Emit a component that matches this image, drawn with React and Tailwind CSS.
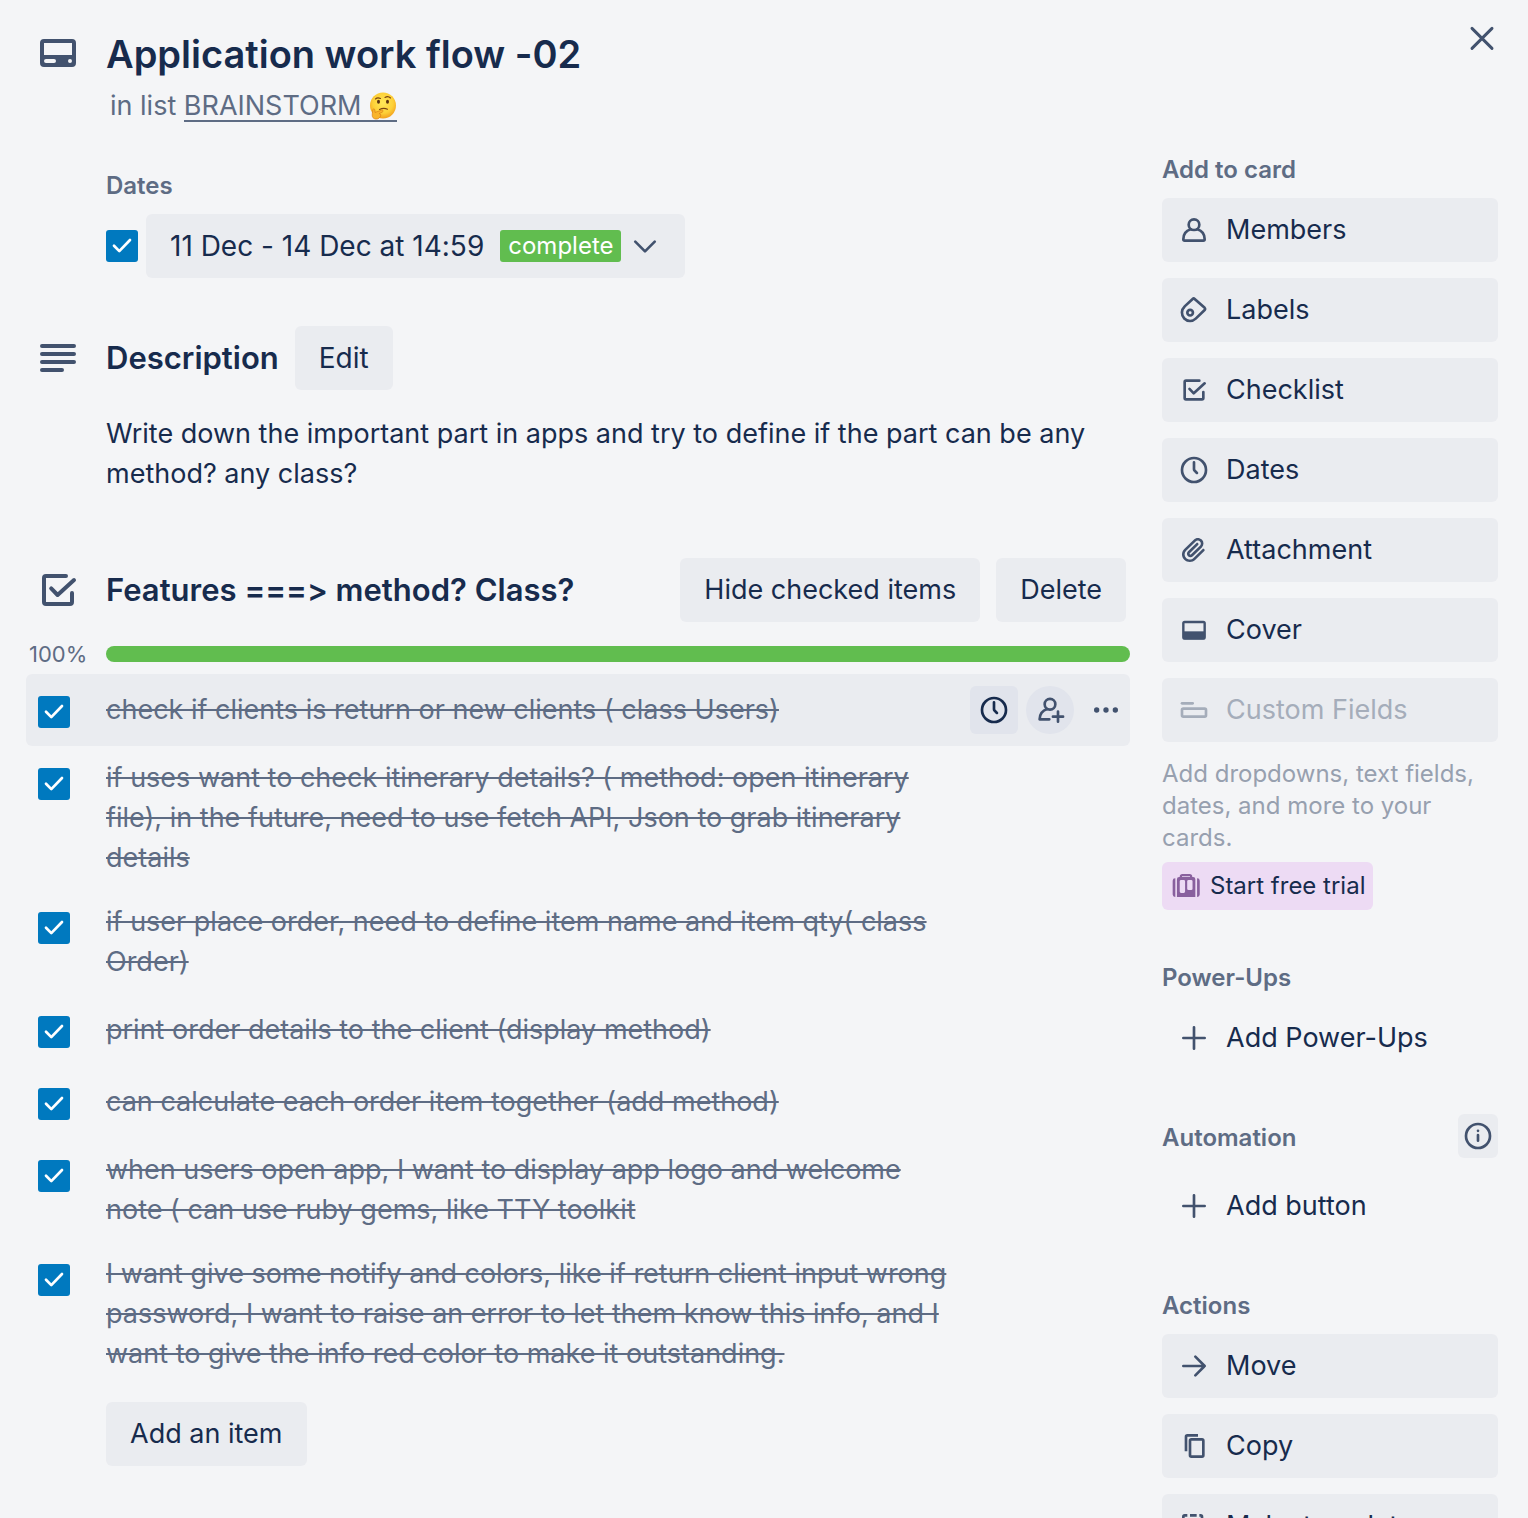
import React, { useState } from 'react';

function Svg({ className = 'size-8', children }) {
  return (
    <svg viewBox="0 0 24 24" className={`shrink-0 ${className}`} fill="none" stroke="currentColor" strokeWidth="2" strokeLinecap="round" strokeLinejoin="round" aria-hidden="true">
      {children}
    </svg>
  );
}

const CardIcon = (p) => (
  <Svg {...p}>
    <rect x="4" y="6" width="16" height="12" rx="1" />
    <path stroke="none" fill="currentColor" fillRule="evenodd" d="M4 13h16v5H4zM6 15a1 1 0 0 0 0 2h4a1 1 0 0 0 0-2zM18 15a1 1 0 1 0 0 2a1 1 0 0 0 0-2z" />
  </Svg>
);
const LinesIcon = (p) => <Svg {...p}><path d="M4 6h16M4 10h16M4 14h16M4 18h10" /></Svg>;
const ChecklistIcon = (p) => (
  <Svg {...p}><path d="M16 5H6a1 1 0 0 0-1 1v12a1 1 0 0 0 1 1h12a1 1 0 0 0 1-1v-4.5M8.6 11.2l3.2 3.3L20 7" /></Svg>
);
const MemberIcon = (p) => (
  <Svg {...p}>
    <circle cx="12" cy="8" r="4" />
    <path d="M9.5 11.5C6.2 12.5 4 15.300 4 19a1 1 0 0 0 1 1h14a1 1 0 0 0 1-1c0-3.700-2.200-6.500-5.500-7.500" />
  </Svg>
);
const LabelIcon = (p) => (
  <Svg {...p}>
    <path d="M5 9.300L11 3.700a1.100 1.100 0 0 1 1.500 0L20 10.400a1.100 1.100 0 0 1 0 1.600L13.300 18.500a6.100 6.100 0 0 1-8.600-.1a6.400 6.400 0 0 1 .3-9.100z" />
    <circle cx="9.100" cy="14" r="2.100" />
  </Svg>
);
const ClockIcon = (p) => <Svg {...p}><circle cx="12" cy="12" r="9" /><path d="M12 6.200v5.200q0 .6.400 1l1.800 1.800" /></Svg>;
const ClipIcon = (p) => (
  <Svg {...p}>
    <path stroke="none" fill="currentColor" d="M11.6426 17.9647C10.1123 19.46 7.62736 19.4606 6.10092 17.9691C4.57505 16.478 4.57769 14.0467 6.10253 12.5566L13.2505 5.57184C14.1476 4.6952 15.5861 4.69251 16.4832 5.56921C17.3763 6.44184 17.3778 7.85135 16.4869 8.72199L9.78361 15.2722C9.53288 15.5172 9.12807 15.5163 8.86954 15.2636C8.61073 15.0107 8.60963 14.6158 8.86954 14.3618L15.0989 8.27463C15.4812 7.90109 15.4812 7.29546 15.0989 6.92192C14.7167 6.54838 14.0969 6.54838 13.7146 6.92192L7.48523 13.0091C6.45911 14.0118 6.46356 15.618 7.48523 16.6163C8.50674 17.6145 10.1511 17.6186 11.1679 16.6249L17.8712 10.0747C19.5274 8.45632 19.5244 5.83555 17.8676 4.2165C16.2047 2.59156 13.5266 2.59657 11.8662 4.21913L4.71822 11.2039C2.42951 13.4404 2.42555 17.083 4.71661 19.3218C7.00774 21.5606 10.7323 21.5597 13.0269 19.3174L19.7133 12.7837C20.0956 12.4101 20.0956 11.8045 19.7133 11.431C19.331 11.0574 18.7113 11.0574 18.329 11.431L11.6426 17.9647Z" />
  </Svg>
);
const CoverIcon = (p) => (
  <Svg {...p}>
    <rect x="4" y="6" width="16" height="12.500" rx="1" strokeWidth="1.800" />
    <path stroke="none" fill="currentColor" d="M4 13h16v6H4z" />
  </Svg>
);
const FieldsIcon = (p) => <Svg {...p}><path d="M3 7h8" /><rect x="3" y="11" width="18" height="6" rx="1" strokeWidth="2" /></Svg>;
const SuitcaseIcon = (p) => (
  <Svg {...p}>
    <path stroke="none" fill="currentColor" fillRule="evenodd" d="M4 6.200v14A1.900 1.900 0 0 1 2 18.400V8A1.900 1.900 0 0 1 4 6.200zM20.300 6.200v14a1.900 1.900 0 0 0 2-1.800V8a1.900 1.900 0 0 0-2-1.800zM7.300 5a2 2 0 0 1 2-2h5.400a2 2 0 0 1 2 2v.3h.6A1.700 1.700 0 0 1 19 7v13.200H5.200V7A1.700 1.700 0 0 1 6.900 5.300h.4zM9 5.300h6V4.700H9zM8.300 7.500a1 1 0 0 0-1 1v7.700a1 1 0 0 0 1 1h2a1 1 0 0 0 1-1V8.500a1 1 0 0 0-1-1zM13.900 7.500a1 1 0 0 0-1 1v5.500a1 1 0 0 0 1 1h2a1 1 0 0 0 1-1V8.500a1 1 0 0 0-1-1z" />
  </Svg>
);
const PlusIcon = (p) => <Svg {...p}><path d="M12 4v16M4 12h16" /></Svg>;
const InfoIcon = (p) => <Svg {...p}><circle cx="12" cy="12" r="9" /><path d="M12 11.300v4.200M12 8.100v.01" /></Svg>;
const ArrowIcon = (p) => <Svg {...p}><path d="M4 12h16M13 5l7 7l-7 7" /></Svg>;
const CopyIcon = (p) => (
  <Svg {...p}>
    <rect x="9" y="7" width="10" height="13" rx="1" />
    <path strokeLinecap="butt" d="M15 4H7a1 1 0 0 0-1 1v11" />
  </Svg>
);
const TemplateIcon = (p) => (
  <Svg {...p}><path strokeLinecap="butt" d="M4 8V5a1 1 0 0 1 1-1h2M9 4h5M16 4h1a1 1 0 0 1 1 1v3M4 10v5M18 10v5M4 17v2a1 1 0 0 0 1 1h2M9 20h5" /></Svg>
);
const AddMemberIcon = (p) => (
  <Svg {...p}>
    <circle cx="12" cy="7.700" r="4" />
    <path d="M10 11.300C6.800 12.300 4.300 14.800 4.200 19H11.500M18 13.200v7.600M14.200 17h7.600" />
  </Svg>
);
const DotsIcon = (p) => (
  <Svg {...p}><g stroke="none" fill="currentColor"><circle cx="5" cy="12" r="2" /><circle cx="12" cy="12" r="2" /><circle cx="19" cy="12" r="2" /></g></Svg>
);
const ChevronIcon = (p) => <Svg {...p}><path d="M4.700 8.700l7.300 7.300l7.300-7.300" /></Svg>;
const CloseIcon = (p) => <Svg {...p}><path strokeWidth="2.200" d="M4.500 4.800l15 15M19.500 4.800l-15 15" /></Svg>;

function ThinkingFace() {
  return (
    <svg viewBox="0 0 28 28" className="size-7 shrink-0" role="img" aria-label="thinking face">
      <defs>
        <radialGradient id="face" cx="50%" cy="40%" r="60%">
          <stop offset="0" stopColor="#ffe85a" />
          <stop offset=".65" stopColor="#fdd038" />
          <stop offset="1" stopColor="#f2a01e" />
        </radialGradient>
      </defs>
      <circle cx="14" cy="13.500" r="13" fill="url(#face)" />
      <ellipse cx="9.500" cy="9.800" rx="1.500" ry="2" fill="#5b3210" />
      <ellipse cx="18.500" cy="9.800" rx="1.500" ry="2" fill="#5b3210" />
      <path d="M6.500 7q2-2 5-.5M16 5.500q3-2 5.500.5M10.500 17.500q4-2 8-.3" fill="none" stroke="#7a4512" strokeWidth="1.100" strokeLinecap="round" />
      <path d="M3.800 17.500c.8-1 2-.6 2 .6l.2 2.400l6.500-2.400c1.600-.5 2.300 1.200.8 2l-3.200 1.500c2 .2 2 2 1 3.400c-1.300 2-4 2.700-6 1.600c-2-1-2-3-1.800-5z" fill="#f9b42b" stroke="#d9801a" strokeWidth=".7" />
    </svg>
  );
}

function Tick({ label, className = '' }) {
  const [on, setOn] = useState(true);
  return (
    <span className={`grid size-8 shrink-0 ${className}`}>
      <input type="checkbox" aria-label={label} checked={on} onChange={() => setOn(!on)} className="peer col-start-1 row-start-1 size-8 appearance-none rounded-[3px] bg-white checked:bg-[#0079bf]" />
      <svg viewBox="0 0 32 32" className="pointer-events-none invisible col-start-1 row-start-1 size-8 peer-checked:visible" fill="none" stroke="#fff" strokeWidth="2.700" strokeLinecap="round" strokeLinejoin="round" aria-hidden="true">
        <path d="M8 15.800l5.300 5.300L24 10" />
      </svg>
    </span>
  );
}

function Button({ children, className = '' }) {
  return (
    <button type="button" className={`h-16 shrink-0 rounded-md bg-[#091e420a] px-6 whitespace-nowrap ${className}`}>
      {children}
    </button>
  );
}

function SideButton({ icon: Icon, children, disabled, plain }) {
  return (
    <button
      type="button"
      disabled={disabled}
      className={`flex h-16 w-full shrink-0 items-center gap-4 rounded-md px-4 text-left whitespace-nowrap disabled:text-[#a5adba] ${plain ? '' : 'bg-[#091e420a]'}`}
    >
      <Icon className={disabled ? 'size-8' : 'size-8 text-[#42526e]'} />
      {children}
    </button>
  );
}

function SideHeading({ children }) {
  return <h3 className="text-2xl leading-10 font-semibold text-[#5e6c84]">{children}</h3>;
}

function CheckItem({ children, active }) {
  return (
    <li className={`flex items-start rounded-md pl-3 ${active ? 'bg-[#091e420a]' : ''}`}>
      <Tick label={children} className="mt-[22px]" />
      <div className="ml-9 flex min-h-[72px] min-w-0 flex-1 items-center py-3 text-[#5e6c84] line-through">
        <span>{children}</span>
      </div>
      <div className="flex w-[172px] shrink-0 items-center justify-end gap-2 pt-3">
        {active && (
          <>
            <button type="button" aria-label="Set due date" className="grid size-12 place-items-center rounded-md bg-[#e1e4ec]">
              <ClockIcon />
            </button>
            <button type="button" aria-label="Assign member" className="grid size-12 place-items-center rounded-full bg-[#e1e4ec] text-[#42526e]">
              <AddMemberIcon />
            </button>
            <button type="button" aria-label="More actions" className="grid size-12 place-items-center text-[#42526e]">
              <DotsIcon />
            </button>
          </>
        )}
      </div>
    </li>
  );
}

const ITEMS = [
  'check if clients is return or new clients ( class Users)',
  'if uses want to check itinerary details? ( method: open itinerary file), in the future, need to use fetch API, Json to grab itinerary details',
  'if user place order, need to define item name and item qty( class Order)',
  'print order details to the client (display method)',
  'can calculate each order item together (add method)',
  'when users open app, I want to display app logo and welcome note ( can use ruby gems, like TTY toolkit',
  'I want give some notify and colors, like if return client input wrong password, I want to raise an error to let them know this info, and I want to give the info red color to make it outstanding.',
];

export default function App() {
  return (
    <div className="h-screen overflow-hidden bg-[#f4f5f7] font-['Inter','Liberation_Sans',sans-serif] text-[27px] leading-10 text-[#172b4d] [font-variant-ligatures:none]">
      <header className="flex items-start pt-[22px] pr-[30px] pl-[34px]">
        <CardIcon className="mt-[7px] size-12 text-[#42526e]" />
        <div className="ml-6 flex-1">
          <h1 className="text-[38px] leading-[64px] font-semibold">Application work flow -02</h1>
          <p className="h-10 pl-1 text-[#5e6c84]">
            in list{' '}
            <a href="#list" className="inline-flex items-center gap-2 border-b-2 border-[#5e6c84] leading-7">
              BRAINSTORM
              <ThinkingFace />
            </a>
          </p>
        </div>
        <button type="button" aria-label="Close" className="text-[#42526e]"><CloseIcon /></button>
      </header>

      <div className="flex items-start gap-8 pt-6 pr-[30px] pl-[26px]">
        <main className="min-w-0 flex-1 pt-4">
          <section className="pl-20">
            <SideHeading>Dates</SideHeading>
            <div className="mt-2 flex items-center gap-2">
              <Tick label="Mark due date complete" />
              <Button className="flex items-center text-[28px]">
                11 Dec - 14 Dec at 14:59
                <span className="ml-4 rounded-[3px] bg-[#61bd4f] px-2 text-2xl leading-8 text-white">complete</span>
                <ChevronIcon className="ml-2 size-8 text-[#42526e]" />
              </Button>
            </div>
          </section>

          <section className="mt-12">
            <div className="flex items-center pl-2">
              <LinesIcon className="size-12 text-[#42526e]" />
              <h2 className="mr-4 ml-6 text-[31px] font-semibold">Description</h2>
              <Button className="text-[28px]">Edit</Button>
            </div>
            <p className="mt-6 pl-20">
              Write down the important part in apps and try to define if the part can be any method? any class?
            </p>
          </section>

          <section className="mt-16">
            <div className="flex items-center pr-1 pl-2">
              <ChecklistIcon className="size-12 text-[#42526e]" />
              <h2 className="ml-6 flex-1 text-[31px] font-semibold whitespace-nowrap [font-feature-settings:'calt'_0]">Features ===&gt; method? Class?</h2>
              <div className="flex gap-4">
                <Button>Hide checked items</Button>
                <Button>Delete</Button>
              </div>
            </div>
            <div className="mt-4 flex items-center">
              <span className="w-20 pl-[3px] text-[22px] leading-8 text-[#5e6c84]">100%</span>
              <div role="progressbar" aria-label="Checklist progress" aria-valuenow={100} aria-valuemin={0} aria-valuemax={100} className="h-4 flex-1 rounded-full bg-[#61bd4f]" />
            </div>
            <ul className="mt-1">
              {ITEMS.map((text, i) => <CheckItem key={text} active={i === 0}>{text}</CheckItem>)}
            </ul>
            <Button className="mt-4 ml-20">Add an item</Button>
          </section>
        </main>

        <aside className="w-[336px] shrink-0">
          <SideHeading>Add to card</SideHeading>
          <div className="mt-2 flex flex-col gap-4">
            <SideButton icon={MemberIcon}>Members</SideButton>
            <SideButton icon={LabelIcon}>Labels</SideButton>
            <SideButton icon={ChecklistIcon}>Checklist</SideButton>
            <SideButton icon={ClockIcon}>Dates</SideButton>
            <SideButton icon={ClipIcon}>Attachment</SideButton>
            <SideButton icon={CoverIcon}>Cover</SideButton>
            <SideButton icon={FieldsIcon} disabled>Custom Fields</SideButton>
          </div>
          <p className="mt-4 text-2xl leading-8 text-[#97a0af]">Add dropdowns, text fields, dates, and more to your cards.</p>
          <button type="button" className="mt-2 flex h-12 items-center gap-2 rounded-md bg-[#eddbf4] px-2 text-2xl whitespace-nowrap">
            <SuitcaseIcon className="size-8 text-[#89609e]" />
            Start free trial
          </button>

          <div className="mt-12">
            <SideHeading>Power-Ups</SideHeading>
            <div className="mt-2"><SideButton icon={PlusIcon} plain>Add Power-Ups</SideButton></div>
          </div>

          <div className="mt-11">
            <div className="flex items-end justify-between">
              <SideHeading>Automation</SideHeading>
              <button type="button" aria-label="About automation" className="grid h-11 w-10 place-items-center rounded-md bg-[#091e420a] text-[#42526e]">
                <InfoIcon />
              </button>
            </div>
            <div className="mt-4"><SideButton icon={PlusIcon} plain>Add button</SideButton></div>
          </div>

          <div className="mt-12">
            <SideHeading>Actions</SideHeading>
            <div className="mt-2 flex flex-col gap-4">
              <SideButton icon={ArrowIcon}>Move</SideButton>
              <SideButton icon={CopyIcon}>Copy</SideButton>
              <SideButton icon={TemplateIcon}>Make template</SideButton>
            </div>
          </div>
        </aside>
      </div>
    </div>
  );
}
